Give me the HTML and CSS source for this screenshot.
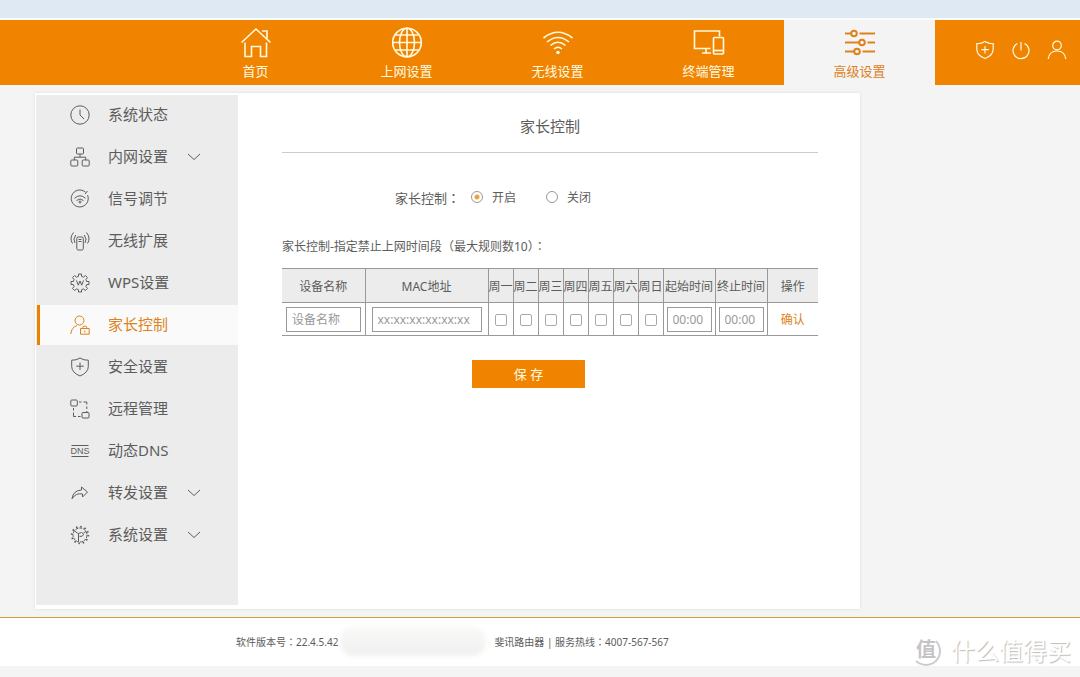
FILE: index.html
```html
<!DOCTYPE html>
<html lang="zh-CN">
<head>
<meta charset="utf-8">
<title>家长控制</title>
<link rel="stylesheet" href="styles.css">
</head>
<body>
<div class="topstrip"></div>
<header class="header">
  <nav class="nav">
    <a class="nav-item" href="#"><svg width="32" height="32" viewBox="0 0 32 32"><path d="M1.500 15.500 16 2l14.500 13.500M5 15.500V29.500h6.500V19.500h9V29.500H26.500V15.500M22 4h5v7.500"/></svg><span>首页</span></a>
    <a class="nav-item" href="#"><svg width="32" height="32" viewBox="0 0 32 32"><circle cx="16" cy="15.500" r="14.300"/><ellipse cx="16" cy="15.500" rx="7.500" ry="14.300"/><path d="M16 1v29M1.500 15.500h29M4 8h24M4 23h24"/></svg><span>上网设置</span></a>
    <a class="nav-item" href="#"><svg width="32" height="32" viewBox="0 0 32 32"><path d="M1.500 11Q16-.5 30.500 11M5 15q11-9 22 0M8.500 18.500q7.500-6.500 15 0M12 22q4-3.500 8 0"/><circle class="solid" cx="16" cy="25.500" r="1.800"/></svg><span>无线设置</span></a>
    <a class="nav-item" href="#"><svg width="32" height="32" viewBox="0 0 32 32"><path d="M17.500 21.500H1.500V4h25v5.500M13 22v3.500M9 26h9"/><rect x="20.500" y="10.500" width="10" height="16.500" rx="1"/><path d="M20.500 23.500h10"/></svg><span>终端管理</span></a>
    <a class="nav-item active" href="#"><svg width="32" height="32" viewBox="0 0 32 32"><path d="M1 6.500h6M15.500 6.500H31M1 15.500h14M23.500 15.500H31M1 24.500h9M18.500 24.500H31"/><circle cx="10" cy="6.500" r="2.800"/><circle cx="18" cy="15.500" r="2.800"/><circle cx="13" cy="24.500" r="2.800"/></svg><span>高级设置</span></a>
  </nav>
  <div class="tools">
    <button type="button" aria-label="安全"><svg width="20" height="20" viewBox="0 0 20 20"><path d="M10 1.500q4 2.500 8.200 2.200V9q0 6.500-8.200 9.500Q1.800 15.500 1.800 9V3.700Q6 4 10 1.500zM10 6v7.500M6.300 9.700h7.500"/></svg></button>
    <button type="button" aria-label="电源"><svg width="20" height="20" viewBox="0 0 20 20"><path d="M6.500 3.500a8 8 0 1 0 7 0M10 2v8.500"/></svg></button>
    <button type="button" aria-label="用户"><svg width="20" height="20" viewBox="0 0 20 20"><circle cx="10" cy="5.500" r="4.300"/><path d="M1.200 19q1-8 8.800-8t8.800 8"/></svg></button>
  </div>
</header>

<main class="card">
  <aside class="sidebar">
    <a class="side-item" href="#"><svg width="20" height="20" viewBox="0 0 20 20"><circle cx="10" cy="10" r="9.200"/><path d="M10 4.500V10l4 4"/></svg><span>系统状态</span></a>
    <a class="side-item" href="#"><svg width="20" height="20" viewBox="0 0 20 20"><rect x="6.500" y="1" width="7" height="6" rx="1"/><rect x=".8" y="13" width="7" height="6" rx="1"/><rect x="12.200" y="13" width="7" height="6" rx="1"/><path d="M10 7v3.200M4.300 13v-2.800h11.400V13"/></svg><span>内网设置</span><svg class="arrow" width="14" height="8" viewBox="0 0 14 8"><path d="m1 1 6 5.500L13 1"/></svg></a>
    <a class="side-item" href="#"><svg width="20" height="20" viewBox="0 0 20 20"><path d="M15.500 3.200A8.500 8.500 0 1 0 17.600 6.200M15 5l2.500-3M4.500 9.300q5.500-5 11 0M6.500 11.500q3.500-3 7 0"/><circle cx="10" cy="13" r="1"/></svg><span>信号调节</span></a>
    <a class="side-item" href="#"><svg width="20" height="20" viewBox="0 0 20 20"><rect x="6.800" y="6" width="6.500" height="13" rx="1.500"/><path d="M8.500 8.500h3M8.500 10.500h3M5 12Q2.500 8 5.800 4M2.500 12.500Q-1 7 3.500 1.500M15 12q2.500-4-.8-8M17.500 12.500Q21 7 16.500 1.500"/></svg><span>无线扩展</span></a>
    <a class="side-item" href="#"><svg width="20" height="20" viewBox="0 0 20 20"><path d="M8.500 1h3v2.300l2 .8 1.900-1.600 2.100 2.100-1.600 1.900.8 2H19v3h-2.300l-.8 2 1.600 1.900-2.100 2.100-1.900-1.600-2 .8V19h-3v-2.300l-2-.8-1.900 1.600-2.100-2.100 1.600-1.900-.8-2H1v-3h2.300l.8-2-1.600-1.900 2.100-2.100 1.900 1.600 2-.8zM6.500 7.500 8.300 12.200 10 8l1.700 4.200 1.800-4.700"/></svg><span>WPS设置</span></a>
    <a class="side-item active" href="#"><svg width="20" height="20" viewBox="0 0 20 20"><circle cx="9.500" cy="5.500" r="4.500"/><path d="M.8 19q.5-6.500 6.200-8.500M10.500 13.500h8.700v5.700h-8.700zM12.500 13.500Q12.500 11 14.800 11t2.300 2.500M14.800 15.500v2"/></svg><span>家长控制</span></a>
    <a class="side-item" href="#"><svg width="20" height="20" viewBox="0 0 20 20"><path d="M10 1q4 2.500 8.300 2.200V9.500q0 6-8.300 9.500-8.300-3.500-8.300-9.500V3.200Q6 3.500 10 1zM10 5.500V13M6.200 9.200h7.600"/></svg><span>安全设置</span></a>
    <a class="side-item" href="#"><svg width="20" height="20" viewBox="0 0 20 20"><rect x=".8" y="1" width="6.500" height="6" rx="1"/><rect x="12" y="13.500" width="7" height="5.500" rx="1"/><path d="M9 3h2.500M13.500 3h3.300v2.500M16.800 7.500V10M16.800 12v1.500M3.500 9v2.500M3.500 13.500V17.500H6M8 17.500h2.500"/></svg><span>远程管理</span></a>
    <a class="side-item" href="#"><svg width="20" height="20" viewBox="0 0 20 20"><path d="M1.500 4.500h17M1.500 15.500h17"/><text class="dns" x="10" y="13.200" text-anchor="middle">DNS</text></svg><span>动态DNS</span></a>
    <a class="side-item" href="#"><svg width="20" height="20" viewBox="0 0 20 20"><path d="m11.500 4 6 5-5 5v-3q-6.500-1.500-10.500 4.800Q3 7.500 11.500 7z"/></svg><span>转发设置</span><svg class="arrow" width="14" height="8" viewBox="0 0 14 8"><path d="m1 1 6 5.500L13 1"/></svg></a>
    <a class="side-item" href="#"><svg width="20" height="20" viewBox="0 0 20 20"><circle cx="10" cy="10" r="8.300" stroke-width="1.800" stroke-dasharray="1.500 2.850"/><circle cx="10" cy="10" r="7" stroke-dasharray="3 1"/><path d="m4.500 6 3.700 2.500M8.500 16.500V8.500q3.500-2.500 5.200.8-1.200 3-4.200 2M13.500 8l2.500-1.500"/></svg><span>系统设置</span><svg class="arrow" width="14" height="8" viewBox="0 0 14 8"><path d="m1 1 6 5.500L13 1"/></svg></a>
  </aside>

  <form class="content">
    <h1 class="title">家长控制</h1>
    <div class="switch" role="radiogroup" aria-labelledby="switch-label">
      <span class="switch-label" id="switch-label">家长控制<span class="punct">：</span></span>
      <label class="option"><input type="radio" name="parental" checked>开启</label>
      <label class="option"><input type="radio" name="parental">关闭</label>
    </div>
    <p class="caption" id="rules-caption">家长控制-指定禁止上网时间段<span class="punct">（</span>最大规则数10<span class="punct">）：</span></p>
    <table class="rules" aria-labelledby="rules-caption">
      <colgroup><col class="c-name"><col class="c-mac"><col class="c-day" span="7"><col class="c-time" span="2"><col></colgroup>
      <thead>
        <tr><th>设备名称</th><th>MAC地址</th><th>周一</th><th>周二</th><th>周三</th><th>周四</th><th>周五</th><th>周六</th><th>周日</th><th>起始时间</th><th>终止时间</th><th>操作</th></tr>
      </thead>
      <tbody>
        <tr>
          <td><input class="field" type="text" placeholder="设备名称" aria-label="设备名称"></td>
          <td class="mac"><input class="field" type="text" placeholder="xx:xx:xx:xx:xx:xx" aria-label="MAC地址"></td>
          <td class="day"><input type="checkbox" aria-label="周一"></td>
          <td class="day"><input type="checkbox" aria-label="周二"></td>
          <td class="day"><input type="checkbox" aria-label="周三"></td>
          <td class="day"><input type="checkbox" aria-label="周四"></td>
          <td class="day"><input type="checkbox" aria-label="周五"></td>
          <td class="day"><input type="checkbox" aria-label="周六"></td>
          <td class="day"><input type="checkbox" aria-label="周日"></td>
          <td class="time"><input class="field" type="text" placeholder="00:00" aria-label="起始时间"></td>
          <td class="time"><input class="field" type="text" placeholder="00:00" aria-label="终止时间"></td>
          <td><a class="confirm" href="#">确认</a></td>
        </tr>
      </tbody>
    </table>
    <button class="save" type="button">保 存</button>
  </form>
</main>

<footer class="footer">
  <span>软件版本号<span class="punct">：</span>22.4.5.42</span>
  <span class="smudge"></span>
  <span>斐讯路由器 | 服务热线<span class="punct">：</span>4007-567-567</span>
  <div class="watermark"><span class="seal">值</span><span>什么值得买</span></div>
</footer>
</body>
</html>
```

FILE: styles.css
```css
* { box-sizing: border-box; }

body {
  margin: 0;
  background: #f4f4f4;
  color: #5c5c5c;
  font-family: "Noto Sans", "Noto Sans CJK SC", sans-serif;
  font-size: 12px;
}

a { color: inherit; text-decoration: none; }
button, input { font: inherit; }
svg { fill: none; stroke: currentColor; flex: none; }

/* Full-width punctuation centred in its cell */
.punct {
  font-family: "Noto Sans CJK TC", sans-serif;
  font-feature-settings: "locl" 0;
  line-height: 1;
}

.topstrip {
  height: 20px;
  background: #dfe9f4;
  border-bottom: 2px solid #fafbfb;
}

/* Header */
.header {
  display: flex;
  height: 65px;
  background: #f08300;
  color: #fffbe0;
}
.nav { display: flex; margin-left: 180px; }
.nav-item {
  display: flex;
  flex-direction: column;
  align-items: center;
  gap: 2px;
  width: 151px;
  padding-top: 7px;
  font-size: 13px;
  line-height: 20px;
}
.nav-item svg { stroke-width: 1.6; }
.nav-item .solid { fill: currentColor; stroke: none; }
.nav-item.active { background: #f4f4f4; color: #dd821c; }
.nav-item.active svg { stroke-width: 2; }
.tools {
  display: flex;
  align-items: center;
  gap: 16px;
  margin-left: auto;
  padding: 0 13px 5px 0;
}
.tools button {
  display: flex;
  padding: 0;
  border: 0;
  background: none;
  color: inherit;
}
.tools svg { stroke-width: 1.2; }

/* Main card */
.card {
  display: flex;
  min-height: 516px;
  margin: 8px 220px 8px 35px;
  padding: 2px 0 4px 1px;
  background: #fff;
  box-shadow: 0 0 3px #ddd;
}
.sidebar { flex: none; width: 202px; background: #ececec; }
.side-item {
  display: flex;
  align-items: center;
  height: 40px;
  margin: 0 0 2px 1px;
  padding-left: 33px;
  font-size: 15px;
  line-height: 20px;
}
.side-item > span { width: 79px; margin-left: 18px; padding-bottom: 2px; }
.side-item.active {
  padding-left: 30px;
  border-left: 3px solid #ec8100;
  background: #fafafa;
  color: #dd821c;
}
.dns { font: 9px "Liberation Sans", sans-serif; fill: currentColor; stroke: none; }

.content { flex: 1; min-width: 0; padding: 0 42px 0 44px; }
.title {
  margin: 0;
  padding: 20px 0 15px;
  border-bottom: 1px solid #ccc;
  font-size: 15px;
  font-weight: 400;
  line-height: 22px;
  text-align: center;
}
.switch {
  display: flex;
  align-items: center;
  height: 20px;
  margin: 34px 0 0 113px;
}
.switch-label { width: 76px; font-size: 13px; }
.option { display: flex; align-items: center; gap: 9px; width: 75px; }
.option input {
  appearance: none;
  width: 12px;
  height: 12px;
  margin: 0;
  border: 1px solid #999;
  border-radius: 50%;
}
.option input:checked { background: radial-gradient(circle, #efa13c 2px, #fff 3px); }
.caption { margin: 30px 0 11px; line-height: 20px; }

.rules { width: 100%; table-layout: fixed; border-collapse: collapse; }
.c-name { width: 83px; }
.c-mac { width: 123px; }
.c-day { width: 25px; }
.c-time { width: 52px; }
.rules th, .rules td {
  padding: 0;
  border: 1px solid #999;
  text-align: center;
  white-space: nowrap;
}
.rules th { height: 34px; background: #ececec; font-weight: 400; }
.rules td { height: 33px; padding: 0 4px; }
.rules tr > :first-child { border-left: 0; }
.rules tr > :last-child { border-right: 0; }
.rules .mac { padding: 0 6px; }
.rules .day { padding: 0; }
.rules .time { padding: 0 3px; }
.field {
  display: block;
  width: 100%;
  height: 25px;
  padding: 0 5px;
  border: 1px solid #999;
  border-radius: 0;
  background: #fff;
}
.field::placeholder { color: #999; opacity: 1; }
.day input {
  display: block;
  appearance: none;
  width: 12px;
  height: 12px;
  margin: 2px auto 0;
  border: 1px solid #aaa;
  border-radius: 2px;
}
.confirm { color: #dd821c; }
.save {
  display: block;
  width: 113px;
  height: 28px;
  margin: 24px 0 0 190px;
  padding: 0 0 2px;
  border: 0;
  background: #f08300;
  color: #fffbe0;
  font-size: 13px;
}

/* Footer */
.footer {
  position: relative;
  display: flex;
  align-items: center;
  height: 49px;
  padding: 0 0 2px 236px;
  border-top: 1px solid #d69a3c;
  background: #fff;
  font-size: 10px;
}
.smudge {
  width: 146px;
  height: 30px;
  margin: 0 8px 0 2px;
  border-radius: 14px;
  background: linear-gradient(#fafaf8, #f0f0f0);
  filter: blur(2px);
}
.watermark {
  position: absolute;
  right: 9px;
  bottom: -3px;
  display: flex;
  align-items: center;
  gap: 10px;
  color: #fff;
  font-size: 24px;
  line-height: 36px;
  text-shadow: 1px 1px 1px #bbb;
}
.seal {
  width: 30px;
  height: 30px;
  border: 2px solid transparent;
  border-right-color: #ccc;
  border-bottom-color: #ccc;
  border-radius: 50%;
  color: #c4c4c4;
  font-size: 20px;
  font-weight: 700;
  line-height: 24px;
  text-align: center;
  text-shadow: none;
}
```
